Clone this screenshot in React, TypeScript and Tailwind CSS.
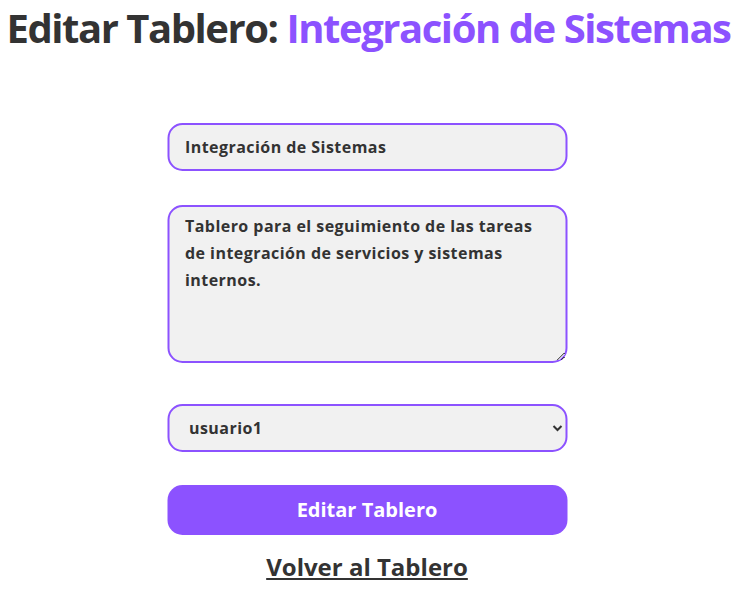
export default function App() {
  const field =
    "block w-full rounded-[15px] border-2 border-[#8c52ff] bg-[#f1f1f1] text-[16px] font-bold tracking-[0.45px] text-[#333] outline-none";

  return (
    <div className="min-h-screen bg-white font-['Open_Sans',sans-serif] text-[#333]">
      <h1 className="whitespace-nowrap pt-[4px] text-center text-[40px] leading-[48px] font-bold tracking-[-1.45px] text-[#333]">
        Editar Tablero: <span className="text-[#8c52ff]">Integración de Sistemas</span>
      </h1>

      <form className="mx-auto mt-[71px] flex w-[400px] -translate-x-[1.5px] flex-col">
        <input
          type="text"
          defaultValue="Integración de Sistemas"
          className={`${field} h-[48px] px-[16px]`}
        />
        <textarea
          defaultValue="Tablero para el seguimiento de las tareas de integración de servicios y sistemas internos."
          className={`${field} mt-[34px] h-[158px] px-[16px] py-[6px] leading-[27px]`}
        />
        <select defaultValue="usuario1" className={`${field} mt-[41px] h-[48px] px-[16px]`}>
          <option value="usuario1">usuario1</option>
          <option value="usuario2">usuario2</option>
        </select>
        <button
          type="button"
          className="mt-[33px] h-[50px] w-full rounded-[15px] bg-[#8c52ff] text-[20px] font-bold text-white"
        >
          Editar Tablero
        </button>
        <a href="#" className="mt-[14px] self-center text-[24px] font-bold text-[#333] underline">
          Volver al Tablero
        </a>
      </form>
    </div>
  );
}
